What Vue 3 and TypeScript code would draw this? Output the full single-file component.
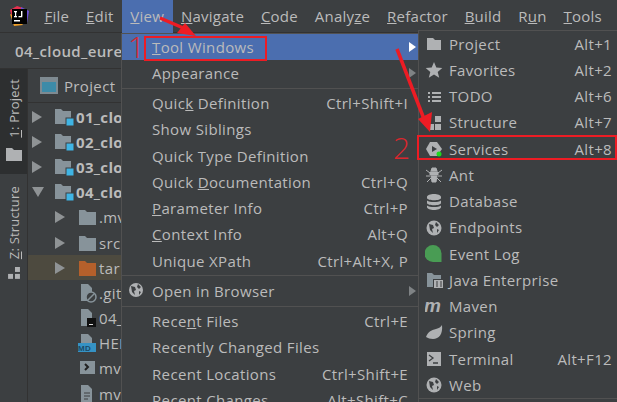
<script setup lang="ts">
interface Row { label?: string; keys?: string; arrow?: boolean; dim?: boolean; sep?: boolean; active?: boolean; icon?: string }

// "_" marks the mnemonic letter
function parts(label: string) {
  const i = label.indexOf("_")
  if (i < 0) return { a: label, u: "", b: "" }
  return { a: label.slice(0, i), u: label.charAt(i + 1), b: label.slice(i + 2) }
}

const bar = ["_File", "_Edit", "_View", "_Navigate", "_Code", "Analy_ze", "_Refactor", "_Build", "R_un", "_Tools", "V"]

const viewMenu: Row[] = [
  { label: "_Tool Windows", arrow: true, active: true },
  { label: "Appearance", arrow: true, dim: true },
  { sep: true },
  { label: "Quic_k Definition", keys: "Ctrl+Shift+I" },
  { label: "Show Siblings" },
  { label: "Quick Type Definition" },
  { label: "Quick _Documentation", keys: "Ctrl+Q" },
  { label: "_Parameter Info", keys: "Ctrl+P" },
  { label: "_Context Info", keys: "Alt+Q" },
  { label: "Unique XPath", keys: "Ctrl+Alt+X, P" },
  { sep: true },
  { label: "Open in Browser", arrow: true, dim: true, icon: "globe" },
  { sep: true },
  { label: "Rece_nt Files", keys: "Ctrl+E" },
  { label: "Recently Changed Files" },
  { label: "Recent Locations", keys: "Ctrl+Shift+E" },
  { label: "Recent Changes", keys: "Alt+Shift+C" }
]

const toolMenu: Row[] = [
  { label: "Project", keys: "Alt+1", icon: "folder" },
  { label: "Favorites", keys: "Alt+2", icon: "star" },
  { label: "TODO", keys: "Alt+6", icon: "todo" },
  { label: "Structure", keys: "Alt+7", icon: "structure" },
  { label: "Services", keys: "Alt+8", icon: "services" },
  { label: "Ant", icon: "ant" },
  { label: "Database", icon: "database" },
  { label: "Endpoints", icon: "globe" },
  { label: "Event Log", icon: "event" },
  { label: "Java Enterprise", icon: "java" },
  { label: "Maven", icon: "maven" },
  { label: "Spring", icon: "spring" },
  { label: "Terminal", keys: "Alt+F12", icon: "terminal" },
  { label: "Web", icon: "globe" }
]

// names stop where the open menu covers them
const tree = [
  { name: "01_clo", bold: true, depth: 0, arrow: "right", icon: "module" },
  { name: "02_clo", bold: true, depth: 0, arrow: "right", icon: "module" },
  { name: "03_clo", bold: true, depth: 0, arrow: "right", icon: "module" },
  { name: "04_clo", bold: true, depth: 0, arrow: "down", icon: "module" },
  { name: ".mv", depth: 1, arrow: "right", icon: "dir" },
  { name: "src", depth: 1, arrow: "right", icon: "dir" },
  { name: "tar", depth: 1, arrow: "right", icon: "target" },
  { name: ".git", depth: 1, icon: "ignored" },
  { name: "04_", depth: 1, icon: "iml" },
  { name: "HEL", depth: 1, icon: "md" },
  { name: "mv", depth: 1, icon: "shell" },
  { name: "mv", depth: 1, icon: "text" }
]
</script>

<template>
  <div class="ide">
    <header class="menubar">
      <svg class="logo" viewBox="0 0 20 20" width="20" height="20">
        <path d="M1 4 8 0l6 2-3 8-8 2z" fill="#e8304f" />
        <path d="M12 1l8 4-2 12-6-2z" fill="#6d4fd8" />
        <path d="M1 8l4 12 9-1-8-9z" fill="#f0a028" />
        <rect x="3" y="3" width="15" height="15" fill="#000" />
        <rect x="5" y="14" width="6" height="1.5" fill="#fff" />
        <rect x="5" y="5" width="3" height="1.3" fill="#fff" />
        <rect x="6" y="5" width="1.2" height="6" fill="#fff" />
        <rect x="5" y="10" width="3" height="1.3" fill="#fff" />
        <rect x="12" y="5" width="1.4" height="5" fill="#fff" />
        <rect x="9.5" y="10" width="3.8" height="1.3" fill="#fff" />
      </svg>
      <span v-for="m in bar" :key="m" class="bar-item" :class="{ on: m === '_View' }">{{ parts(m).a }}<u>{{ parts(m).u }}</u>{{ parts(m).b }}</span>
    </header>

    <div class="navbar">04_cloud_eure</div>

    <div class="body">
      <aside class="strip">
        <div class="strip-tab selected">
          <span class="vtext"><u>1</u>: Project</span>
          <svg width="16" height="13" viewBox="0 0 16 13"><path d="M0 0h6l2 2h8v11H0z" fill="#afb1b3" /></svg>
        </div>
        <div class="strip-tab">
          <span class="vtext"><u>Z</u>: Structure</span>
          <svg width="12" height="12" viewBox="0 0 12 12" fill="#afb1b3"><rect x="7" y="0" width="5" height="5" /><rect x="0" y="7" width="5" height="5" /><rect x="7" y="7" width="5" height="5" /></svg>
        </div>
      </aside>

      <section class="panel">
        <div class="panel-head">
          <svg width="18" height="17" viewBox="0 0 18 17"><rect width="18" height="17" fill="#7e8a91" /><rect x="2" y="5" width="14" height="10" fill="#3d8ba8" /></svg>
          <span>Project</span>
        </div>
        <div class="tree">
          <div v-for="t in tree" :key="t.name + t.icon" class="tree-row" :class="[`d${t.depth}`, { hl: t.icon === 'target' }]">
            <span class="tw" :class="t.arrow"></span>
            <svg class="node" width="20" height="20" viewBox="0 0 20 20">
              <template v-if="t.icon === 'module'">
                <path d="M0 2h6l2 2h8v13H0z" fill="#87939a" /><rect x="11" y="11" width="8" height="8" fill="#3fb4e4" stroke="#3c3f41" />
              </template>
              <path v-else-if="t.icon === 'dir'" d="M1 3h6l2 2h9v13H1z" fill="#87939a" />
              <path v-else-if="t.icon === 'target'" d="M1 3h6l2 2h9v13H1z" fill="#b5602b" />
              <template v-else>
                <path v-if="t.icon !== 'shell'" d="M3 1h7l4 4v13H3z" fill="#87939a" />
                <template v-if="t.icon === 'ignored'">
                  <circle cx="13" cy="14" r="5" fill="#3c3f41" stroke="#87939a" stroke-width="1.5" /><path d="M10 17l6-6" stroke="#87939a" stroke-width="1.5" />
                </template>
                <template v-if="t.icon === 'iml'">
                  <rect x="9" y="10" width="9" height="9" fill="#111" /><rect x="11" y="16" width="4" height="1" fill="#ddd" />
                </template>
                <template v-if="t.icon === 'md'">
                  <rect x="-1" y="10" width="19" height="9" fill="#3592c4" />
                  <text x="0" y="18" font-size="8" font-weight="700" fill="#1d4a66" font-family="Liberation Sans">MD</text>
                </template>
                <template v-if="t.icon === 'shell'">
                  <rect x="2" y="3" width="15" height="13" fill="#87939a" /><path d="M7 6l3 3-3 3" fill="none" stroke="#222" stroke-width="2" />
                </template>
                <path v-if="t.icon === 'text'" d="M6 9h6M6 12h6M6 15h4" stroke="#3c3f41" />
              </template>
            </svg>
            <span class="tree-name" :class="{ bold: t.bold }">{{ t.name }}</span>
          </div>
        </div>
      </section>
    </div>

    <!-- View dropdown -->
    <div class="menu view-menu">
      <template v-for="(r, i) in viewMenu" :key="i">
        <div v-if="r.sep" class="sep"></div>
        <div v-else class="row" :class="{ active: r.active }">
          <svg v-if="r.icon" class="row-icon" width="16" height="16" viewBox="0 0 16 16">
            <circle cx="8" cy="8" r="7" fill="#afb1b3" /><path d="M3 4l4 1 1 3-2 1 1 4-3-3zM10 2l3 3-2 2-2-2zM11 9l2 1-2 3z" fill="#3c3f41" />
          </svg>
          <span class="row-label">{{ parts(r.label!).a }}<u>{{ parts(r.label!).u }}</u>{{ parts(r.label!).b }}</span>
          <span v-if="r.keys" class="keys">{{ r.keys }}</span>
          <span v-if="r.arrow" class="caret" :class="{ dim: r.dim }"></span>
        </div>
      </template>
    </div>

    <!-- Tool Windows submenu -->
    <div class="menu tool-menu">
      <div v-for="r in toolMenu" :key="r.label" class="row">
        <svg class="row-icon" width="18" height="18" viewBox="0 0 18 18">
          <path v-if="r.icon === 'folder'" d="M2 3h6l2 2h6v10H2z" fill="#afb1b3" />
          <path v-else-if="r.icon === 'star'" d="M9 1l2.3 5.6 6 .4-4.6 3.9 1.5 5.9L9 13.6l-5.2 3.2 1.5-5.9L.7 7l6-.4z" fill="#afb1b3" />
          <path v-else-if="r.icon === 'todo'" d="M3 4h2v2H3zM7 4h9v2H7zM3 8h2v2H3zM7 8h9v2H7zM3 12h2v2H3zM7 12h9v2H7z" fill="#afb1b3" />
          <path v-else-if="r.icon === 'structure'" d="M10 2h6v6h-6zM3 10h6v6H3zM10 10h6v6h-6z" fill="#afb1b3" />
          <template v-else-if="r.icon === 'services'">
            <path d="M5 2h7l5 7-5 7H5L1 9z" fill="#afb1b3" /><path d="M7 6l5 3-5 3z" fill="#3c3f41" /><circle cx="14" cy="14" r="2.500" fill="#1fd81f" />
          </template>
          <path v-else-if="r.icon === 'ant'" d="M7 2h4l1 3h-6zM5 6h8v3H5zM6 10h6l-1 6H7zM1 4l4 3M17 4l-4 3M1 10h4M17 10h-4M2 16l4-4M16 16l-4-4" fill="#afb1b3" stroke="#afb1b3" />
          <path v-else-if="r.icon === 'database'" d="M2 4c0-4 14-4 14 0v1c0 3-14 3-14 0zM2 7.500c3 2 11 2 14 0V10c0 3-14 3-14 0zM2 12.500c3 2 11 2 14 0V14c0 4-14 4-14 0z" fill="#afb1b3" />
          <template v-else-if="r.icon === 'globe'">
            <circle cx="9" cy="9" r="7.500" fill="#afb1b3" /><path d="M4 5l4 1 1 3-2 1 1 4-3-3zM11 3l3 3-2 2-2-2zM12 10l2 1-2 3z" fill="#3c3f41" />
          </template>
          <path v-else-if="r.icon === 'event'" d="M8 0a8.500 8.500 0 0 1 8.500 8.500V17H8A8.500 8.500 0 0 1 8 0z" fill="#499c54" />
          <template v-else-if="r.icon === 'java'">
            <path d="M2 2h5l2 2h7v4H8v8H2z" fill="#87939a" /><rect x="9" y="9" width="9" height="8" fill="#afb1b3" /><path d="M11 11h2M11 13h2M11 15h2M15 11h2M15 13h2M15 15h2" stroke="#3c3f41" />
          </template>
          <text v-else-if="r.icon === 'maven'" x="-1" y="14" font-size="19" font-weight="700" font-style="italic" fill="#afb1b3" font-family="Liberation Sans">m</text>
          <path v-else-if="r.icon === 'spring'" d="M17 1c1 9-3 14-9 14-3 0-5-1-7-2 2-5 5-7 10-8 3-1 5-2 6-4z" fill="#afb1b3" />
          <template v-else-if="r.icon === 'terminal'">
            <rect x="2" y="2" width="14" height="14" fill="#afb1b3" /><path d="M4 5l4 3-4 3M8 13h5" fill="none" stroke="#3c3f41" stroke-width="1.300" />
          </template>
        </svg>
        <span class="row-label">{{ r.label }}</span>
        <span v-if="r.keys" class="keys">{{ r.keys }}</span>
      </div>
    </div>

    <!-- annotations pasted on top of the screenshot -->
    <svg class="marks" width="617" height="402" viewBox="0 0 617 402">
      <rect x="145" y="37" width="121" height="23" fill="none" stroke="#ed1c24" stroke-width="2" />
      <rect x="418" y="136" width="198" height="23" fill="none" stroke="#ed1c24" stroke-width="2" />
      <path d="M160 18l28 12" stroke="#ed1c24" stroke-width="3.500" />
      <path d="M196 36l-11-13-8 10z" fill="#ed1c24" />
      <path d="M397 49l27 70" stroke="#ed1c24" stroke-width="3.500" />
      <path d="M430 132l2-20-14 7z" fill="#ed1c24" />
      <text x="128" y="58" class="num">1</text>
      <text x="393" y="159" class="num">2</text>
    </svg>
  </div>
</template>

<style scoped>
.ide {
  position: relative;
  width: 617px;
  height: 402px;
  overflow: hidden;
  background: #3c3f41;
  color: #bbbbbb;
  font-family: "Open Sans", "Noto Sans", sans-serif;
  font-size: 15px;
  letter-spacing: 0.35px;
  display: flex;
  flex-direction: column;
}

.menubar {
  height: 33px;
  flex: none;
  display: flex;
  align-items: center;
  padding-left: 9px;
  border-bottom: 1px solid #323232;
  box-sizing: border-box;
  letter-spacing: 0.25px;
}

.logo {
  flex: none;
  margin-right: 7px;
}

.bar-item {
  flex: none;
  padding: 0 8.4px;
  height: 33px;
  line-height: 33px;
  white-space: nowrap;
}

.bar-item.on {
  background: #4b6eaf;
}

.navbar {
  height: 36px;
  flex: none;
  line-height: 36px;
  padding-left: 15px;
  font-weight: 600;
  border-bottom: 1px solid #323232;
  box-sizing: border-box;
}

.body {
  flex: 1;
  display: flex;
  min-height: 0;
}

.strip {
  width: 27px;
  flex: none;
  border-right: 1px solid #323232;
}

.strip-tab {
  height: 105px;
  padding-top: 10px;
  box-sizing: border-box;
  display: flex;
  flex-direction: column;
  align-items: center;
  gap: 10px;
  font-size: 13px;
  letter-spacing: 0.2px;
}

.strip-tab.selected {
  background: #2d2f30;
}

.strip-tab + .strip-tab {
  padding-top: 12px;
  gap: 8px;
}

.vtext {
  writing-mode: vertical-rl;
  transform: rotate(180deg);
  white-space: nowrap;
}

.panel {
  flex: none;
  width: 93px;
  overflow: hidden;
}

.panel-head {
  height: 34px;
  display: flex;
  align-items: center;
  gap: 6px;
  padding-left: 12px;
  border-bottom: 1px solid #323232;
  box-sizing: border-box;
}

.tree {
  padding-top: 1px;
}

.tree-row {
  height: 25.2px;
  display: flex;
  align-items: center;
  white-space: nowrap;
}

.tree-row.hl {
  background: #4d4a3f;
}

.tree-row.d0 .tw {
  margin-left: 4px;
}

.tree-row.d1 .tw {
  margin-left: 27px;
}

.tw {
  flex: none;
}

.tw.right {
  width: 0;
  height: 0;
  border-left: 10px solid #8f9395;
  border-top: 6px solid transparent;
  border-bottom: 6px solid transparent;
  margin-right: 13px;
}

.tw.down {
  width: 0;
  height: 0;
  margin-right: 11px;
  border-top: 10px solid #8f9395;
  border-left: 6px solid transparent;
  border-right: 6px solid transparent;
}

.tree-row.d1 .tw:not(.right) {
  margin-right: 13px;
  width: 10px;
}

.node {
  flex: none;
}

.tree-name {
  margin-left: 1px;
}

.tree-name.bold {
  font-weight: 700;
}

.menu {
  position: absolute;
  background: #3c3f41;
  border: 1px solid #515151;
  box-sizing: border-box;
}

.view-menu {
  left: 121px;
  top: 33px;
  width: 298px;
  height: 369px;
  overflow: hidden;
  border-bottom: none;
}

.tool-menu {
  left: 418px;
  top: 30px;
  width: 210px;
  height: 369px;
}

.row {
  height: 26.25px;
  display: flex;
  align-items: center;
  padding: 0 9px 1px 30px;
  position: relative;
  white-space: nowrap;
  box-sizing: border-box;
}

.tool-menu .row {
  padding-right: 15px;
}

.row.active {
  background: #4b6eaf;
}

.row-icon {
  position: absolute;
  left: 6px;
  top: 4px;
}

.keys {
  margin-left: auto;
}

.view-menu .row {
  padding-right: 10px;
}

.caret {
  position: absolute;
  right: 2px;
  top: 8px;
  border-left: 7px solid #fff;
  border-top: 5px solid transparent;
  border-bottom: 5px solid transparent;
}

.caret.dim {
  border-left-color: #7f8385;
}

.sep {
  height: 4px;
  border-top: 1px solid #515151;
  box-sizing: border-box;
  transform: translateY(1px);
}

.marks {
  position: absolute;
  left: 0;
  top: 0;
  pointer-events: none;
}

.num {
  fill: #d9272e;
  font-size: 30px;
  font-weight: 300;
  letter-spacing: 0;
  font-family: "Open Sans", sans-serif;
}
</style>
